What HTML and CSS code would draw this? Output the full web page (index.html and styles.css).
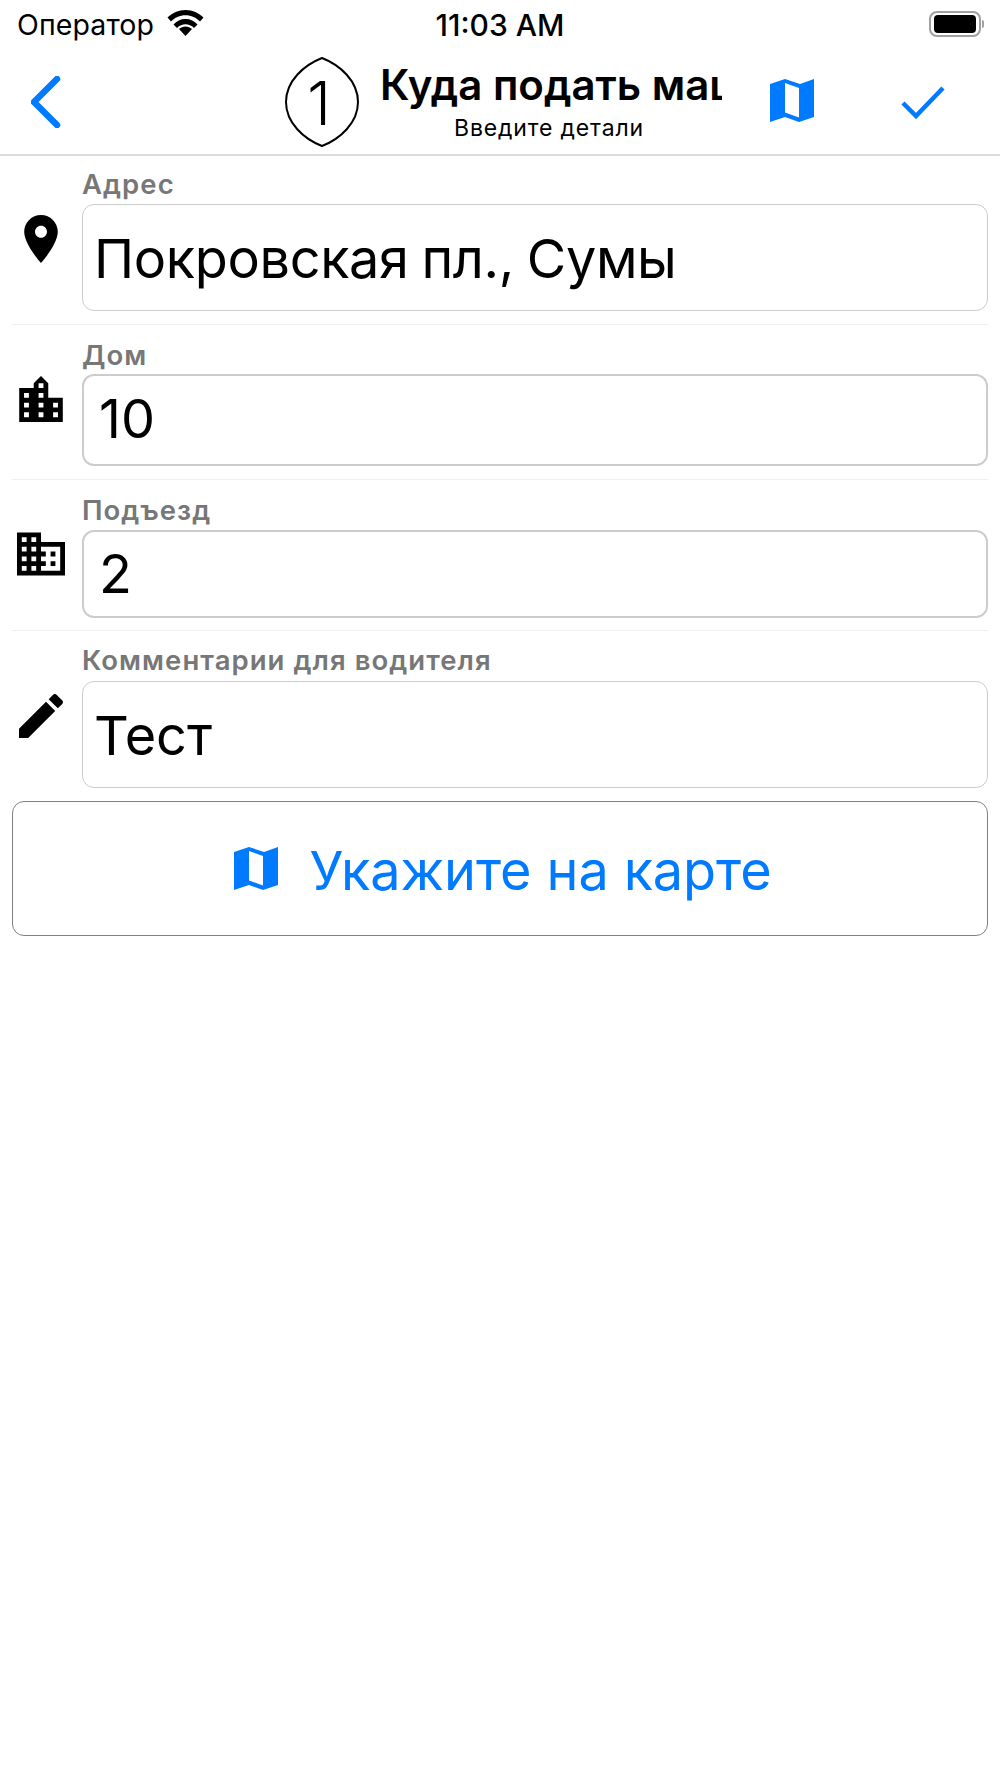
FILE: index.html
```html
<!DOCTYPE html>
<html lang="ru">
<head>
<meta charset="utf-8">
<title>Куда подать машину</title>
<link rel="stylesheet" href="styles.css">
</head>
<body>
<div class="status">
  <div class="status-left">
    <span class="carrier">Оператор</span>
    <svg class="wifi" viewBox="0 0 36 26"><path d="M18 26 L11.5 19 C15 15.5 21 15.5 24.5 19 Z M18 9 C23 9 27 11 30 14.500 L26.500 18 C24 15.500 21 14.300 18 14.300 C15 14.300 12 15.500 9.500 18 L6 14.500 C9 11 13 9 18 9 Z M18 0 C25 0 31.500 3 36 7.500 L32.500 11.500 C29 7.500 23.500 5.200 18 5.200 C12.500 5.200 7 7.500 3.500 11.500 L0 7.500 C4.500 3 11 0 18 0 Z"/></svg>
  </div>
  <div class="time">11:03 AM</div>
  <div class="status-right">
    <div class="battery"><div class="battery-fill"></div></div>
    <div class="battery-cap"></div>
  </div>
</div>
<header class="nav">
  <svg class="back" viewBox="0 0 32 52"><path d="M26 3 L3 26 L26 49"/></svg>
  <div class="head-center">
    <div class="shield">
      <svg class="shield-shape" viewBox="0 0 74 90"><path d="M37 1 C55 8 73 24 73 45 C73 66 55 82 37 89 C19 82 1 66 1 45 C1 24 19 8 37 1 Z"/></svg>
      <span class="shield-num">1</span>
    </div>
    <div class="titles">
      <div class="title">Куда подать маш</div>
      <div class="subtitle">Введите детали</div>
    </div>
  </div>
  <svg class="map-icon nav-map" viewBox="0 0 44 44"><path fill-rule="evenodd" d="M0 5 L15 0 L30 5 L44 0 V38 L29 43 L15 38 L0 43 Z M15 4 V33.500 L29 38.500 V9 Z"/></svg>
  <svg class="check" viewBox="0 0 44 34"><path d="M2 18 L15 31 L42 3"/></svg>
</header>
<main>
  <section class="row row-1">
    <div class="icon-slot">
      <svg class="icon" viewBox="5 2 14 20"><path d="M12 2C8.130 2 5 5.130 5 9c0 5.250 7 13 7 13s7-7.750 7-13c0-3.870-3.130-7-7-7zm0 9.500c-1.380 0-2.500-1.120-2.500-2.500s1.120-2.500 2.500-2.500 2.500 1.120 2.500 2.500-1.120 2.500-2.500 2.500z"/></svg>
    </div>
    <div class="field">
      <label class="label">Адрес</label>
      <div class="input input-tall input-address">Покровская пл., Сумы</div>
    </div>
  </section>
  <section class="row row-2">
    <div class="icon-slot">
      <svg class="icon" viewBox="3 2 18 19"><path d="M15 11V5l-3-3-3 3v2H3v14h18V11h-6zm-8 8H5v-2h2v2zm0-4H5v-2h2v2zm0-4H5V9h2v2zm6 8h-2v-2h2v2zm0-4h-2v-2h2v2zm0-4h-2V9h2v2zm0-4h-2V5h2v2zm6 12h-2v-2h2v2zm0-4h-2v-2h2v2z"/></svg>
    </div>
    <div class="field">
      <label class="label">Дом</label>
      <div class="input input-strong input-short">10</div>
    </div>
  </section>
  <section class="row row-3">
    <div class="icon-slot">
      <svg class="icon" viewBox="2 3 20 18"><path d="M12 7V3H2v18h20V7H12zM6 19H4v-2h2v2zm0-4H4v-2h2v2zm0-4H4V9h2v2zm0-4H4V5h2v2zm4 12H8v-2h2v2zm0-4H8v-2h2v2zm0-4H8V9h2v2zm0-4H8V5h2v2zm10 12h-8v-2h2v-2h-2v-2h2v-2h-2V9h8v10zm-2-8h-2v2h2v-2zm0 4h-2v2h2v-2z"/></svg>
    </div>
    <div class="field">
      <label class="label">Подъезд</label>
      <div class="input input-strong input-shorter">2</div>
    </div>
  </section>
  <section class="row row-4">
    <div class="icon-slot">
      <svg class="icon" viewBox="3 3 18 18"><path d="M3 17.250V21h3.750L17.810 9.940l-3.750-3.750L3 17.250zM20.710 7.040c.390-.390.390-1.020 0-1.410l-2.340-2.340c-.390-.390-1.020-.390-1.410 0l-1.830 1.830 3.750 3.750 1.830-1.830z"/></svg>
    </div>
    <div class="field">
      <label class="label">Комментарии для водителя</label>
      <div class="input input-tall">Тест</div>
    </div>
  </section>
  <button class="map-button" type="button">
    <svg class="map-icon button-map" viewBox="0 0 44 44"><path fill-rule="evenodd" d="M0 5 L15 0 L30 5 L44 0 V38 L29 43 L15 38 L0 43 Z M15 4 V33.500 L29 38.500 V9 Z"/></svg>
    <span class="button-text">Укажите на карте</span>
  </button>
</main>
</body>
</html>
```
FILE: styles.css
```css
* { box-sizing: border-box; }
html, body { margin: 0; background: #fff; }
body {
  width: 1000px;
  min-height: 1778px;
  font-family: Inter, "Noto Sans", sans-serif;
  color: #000;
  overflow: hidden;
}
.status {
  height: 48px;
  display: grid;
  grid-template-columns: 1fr auto 1fr;
  align-items: center;
  padding: 2px 17px 0;
}
.status-left { display: flex; align-items: center; gap: 13px; }
.carrier { font-size: 28.500px; line-height: 34px; letter-spacing: 0.1px; }
.wifi { width: 37px; height: 26px; margin-top: -4px; }
.time { font-size: 30px; font-weight: 500; line-height: 34px; }
.status-right { display: flex; justify-content: flex-end; align-items: center; margin-right: -1px; margin-top: -2px; }
.battery {
  width: 52px; height: 26px;
  border: 2px solid #a0a0a0;
  border-radius: 8px;
  padding: 2px 3px;
}
.battery-fill { width: 100%; height: 100%; background: #000; border-radius: 4px; }
.battery-cap { width: 2px; height: 8px; background: #a0a0a0; border-radius: 0 2px 2px 0; margin-left: 1px; }

.nav {
  height: 108px;
  display: flex;
  align-items: flex-start;
  border-bottom: 2px solid #dcdcdc;
}
.back {
  width: 32px; height: 52px;
  margin: 28px 0 0 31px;
  fill: none; stroke: #007aff; stroke-width: 6.500; stroke-linecap: round; stroke-linejoin: round;
}
.head-center { display: flex; margin: 9px 0 0 222px; width: 437px; }
.shield { display: grid; place-items: center; width: 74px; height: 90px; flex: none; }
.shield-shape { grid-area: 1 / 1; width: 74px; height: 90px; fill: #fff; stroke: #000; stroke-width: 2; }
.shield-num { grid-area: 1 / 1; font-size: 60px; font-weight: 350; line-height: 1; margin: 2px 6px 0 0; }
.titles { flex: 1; min-width: 0; margin-left: 21px; overflow: hidden; padding-top: 2px; }
.title { font-size: 42px; font-weight: 600; line-height: 52px; white-space: nowrap; overflow: hidden; }
.subtitle { width: 338px; font-size: 23px; line-height: 28px; letter-spacing: 0.85px; text-align: center; margin-top: 3px; }
.map-icon { fill: #007aff; flex: none; }
.nav-map { width: 44px; height: 44px; margin: 31px 0 0 48px; }
.check {
  width: 44px; height: 34px;
  margin: 37px 0 0 87px;
  fill: none; stroke: #007aff; stroke-width: 4.500;
}

main { padding: 0 12px; }
.row {
  display: flex;
  align-items: flex-start;
  border-bottom: 1px solid #efefef;
  padding-bottom: 13px;
}
.row-3 { padding-bottom: 12px; }
.row-4 { border-bottom: 0; }
.icon-slot { flex: none; width: 70px; }
.icon { display: block; }
.row-1 .icon { width: 34px; height: 48px; margin: 59px 0 0 12px; }
.row-2 .icon { width: 44px; height: 46px; margin: 51px 0 0 7px; }
.row-3 .icon { width: 48px; height: 44px; margin: 52px 0 0 5px; }
.row-4 .icon { width: 44px; height: 44px; margin: 63px 0 0 7px; }
.field { flex: 1; min-width: 0; }
.label {
  display: block;
  font-size: 27.500px;
  font-weight: 600;
  color: #777;
  line-height: 31px;
  letter-spacing: 1.050px;
}
.row-1 .label { padding-top: 13px; padding-bottom: 4px; }
.row-2 .label { padding-top: 15px; padding-bottom: 3px; }
.row-3 .label { padding-top: 15px; padding-bottom: 4px; }
.row-4 .label { padding-top: 14px; padding-bottom: 5px; }
.input {
  border-radius: 12px;
  display: flex;
  align-items: center;
  padding: 0 0 0 11px;
  font-size: 54px;
  line-height: 64px;
  background: #fff;
}
.input-address { letter-spacing: -0.35px; word-spacing: -2px; }
.input-tall { height: 107px; border: 1px solid #ccc; padding-top: 2px; }
.input-strong { border: 2px solid #ccc; padding-left: 15px; }
.input-short { height: 92px; padding-bottom: 2px; }
.input-shorter { height: 88px; }
.map-button {
  display: flex;
  width: 100%;
  height: 135px;
  border: 1px solid #808080;
  border-radius: 12px;
  background: #fff;
  align-items: center;
  justify-content: center;
  gap: 31px;
  color: #007aff;
  font-family: inherit;
  font-size: 54px;
  padding: 0 4px 0 10px;
}
.button-map { width: 44px; height: 44px; }
.button-text { padding-top: 4px; letter-spacing: -0.1px; }
```
